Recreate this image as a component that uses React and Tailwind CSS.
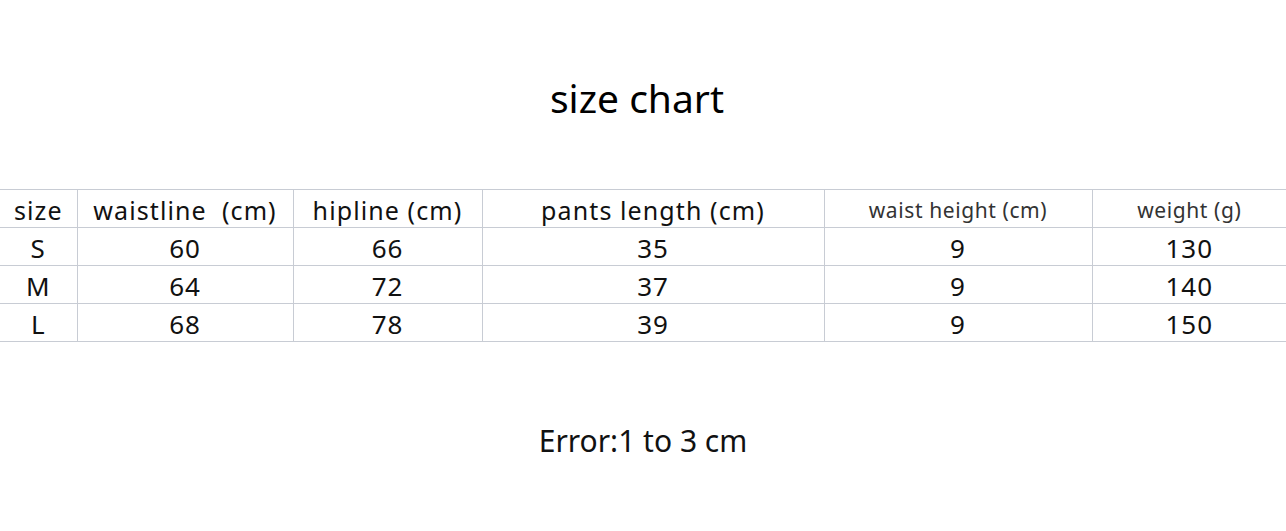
import React from 'react';

const cols = [
  { label: 'size', w: 'w-[77px]', small: false },
  { label: 'waistline  (cm)', w: 'w-[216px]', small: false },
  { label: 'hipline (cm)', w: 'w-[189px]', small: false },
  { label: 'pants length (cm)', w: 'w-[342px]', small: false },
  { label: 'waist height (cm)', w: 'w-[268px]', small: true },
  { label: 'weight (g)', w: 'w-[194px]', small: true },
];

const rows = [
  ['S', '60', '66', '35', '9', '130'],
  ['M', '64', '72', '37', '9', '140'],
  ['L', '68', '78', '39', '9', '150'],
];

export default function App() {
  return (
    <div className="w-[1286px] h-[531px] bg-white flex flex-col" style={{ fontFamily: '"Noto Sans", "Noto Sans CJK SC", sans-serif' }}>
      {/* title */}
      <div className="h-[189px] pt-[70px] pr-[12px] text-center">
        <h1 className="text-[39px] leading-[56px] text-black">size chart</h1>
      </div>

      <table className="border-collapse table-fixed w-[1286px]">
        <thead>
          <tr className="h-[38px] border-y border-[#c8ccd4]">
            {cols.map((c, i) => (
              <th
                key={c.label}
                className={`${c.w} p-0 pt-[3px] leading-none font-normal whitespace-pre text-center ${i > 0 ? 'border-l border-[#c8ccd4]' : ''} ${c.small ? 'text-[21px] tracking-[0.6px] text-[#333]' : 'text-[25px] tracking-[1.1px] text-[#111]'}`}
              >
                {c.label}
              </th>
            ))}
          </tr>
        </thead>
        <tbody>
          {rows.map(r => (
            <tr key={r[0]} className="h-[38px] border-b border-[#c8ccd4]">
              {r.map((v, i) => (
                <td key={i} className={`p-0 pt-[3px] leading-none text-center text-[26px] tracking-[1px] text-[#111] ${i > 0 ? 'border-l border-[#c8ccd4]' : ''}`}>
                  {v}
                </td>
              ))}
            </tr>
          ))}
        </tbody>
      </table>

      <div className="pt-[79px] text-center">
        <p className="text-[30px] leading-[40px] text-[#111]">Error:1 to 3 cm</p>
      </div>
    </div>
  );
}
